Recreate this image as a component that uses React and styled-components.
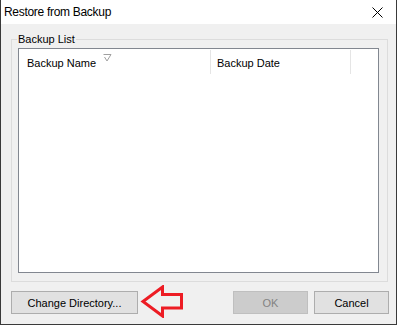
import React from 'react'
import styled, { createGlobalStyle } from 'styled-components'

const GlobalStyle = createGlobalStyle`
    body {
        margin: 0;
        background: #ffffff;
        font-family: "Liberation Sans", Arial, sans-serif;
    }
`;

const Window = styled.div`
    width: 397px;
    height: 325px;
    box-sizing: border-box;
    border: 1px solid #3a3a3a;
    border-top: none;
    display: flex;
    flex-direction: column;
    background: #f0f0f0;
`;

const TitleBar = styled.div`
    height: 24px;
    flex-shrink: 0;
    background: #ffffff;
    display: flex;
    align-items: center;
    justify-content: space-between;
    padding: 0 13px 0 3px;

    h1 {
        margin: 0;
        font-size: 12px;
        font-weight: normal;
        color: #000;
        letter-spacing: -0.3px;
    }
`;

const Body = styled.div`
    flex: 1;
    display: flex;
    flex-direction: column;
    padding: 9px 7px 10px 10px;
`;

const Group = styled.fieldset`
    margin: 0 1px 0 0;
    padding: 0 8px 6px 6px;
    border: 1px solid #dcdcdc;
    height: 249px;
    box-sizing: border-box;

    legend {
        padding: 0 1px;
        margin-left: -1px;
        font-size: 11px;
        line-height: 13px;
        color: #000;
    }
`;

const ListView = styled.div`
    height: 225px;
    box-sizing: border-box;
    margin-top: 2px;
    background: #ffffff;
    border: 1px solid #828790;
`;

const HeaderRow = styled.div`
    display: flex;
    height: 24px;
    padding-top: 1px;
`;

const Column = styled.div`
    width: ${p => p.$width}px;
    box-sizing: border-box;
    border-right: 1px solid #e5e5e5;
    padding: 2px 0 0 ${p => p.$pad}px;
    display: flex;
    align-items: center;
    font-size: 11px;
    color: #000;
    position: relative;
`;

const SortArrow = styled.svg`
    position: absolute;
    left: 84px;
    top: 4px;
`;

const ButtonRow = styled.div`
    display: flex;
    align-items: flex-start;
    margin-top: 9px;
    height: 23px;
`;

const Button = styled.button`
    width: ${p => p.$width || 75}px;
    height: 23px;
    box-sizing: border-box;
    margin: 0;
    padding: 0;
    font-family: "Liberation Sans", Arial, sans-serif;
    font-size: 11px;
    color: ${p => (p.disabled ? '#838383' : '#000')};
    background: ${p => (p.disabled ? '#cccccc' : '#e1e1e1')};
    border: 1px solid ${p => (p.disabled ? '#bfbfbf' : '#adadad')};
    border-radius: 0;
`;

const Spacer = styled.div`
    flex: 1;
`;

const Actions = styled.div`
    display: flex;
    gap: 6px;
`;

const Pointer = styled.svg`
    margin: -6px 0 0 2px;
    flex-shrink: 0;
`;

export default function App() {
    return (
        <>
            <GlobalStyle />
            <Window>
                <TitleBar>
                    <h1>Restore from Backup</h1>
                    <svg width="11" height="11" viewBox="0 0 11 11">
                        <path d="M0.5 0.5 L10.5 10.5 M10.5 0.5 L0.5 10.5" stroke="#000" strokeWidth="1" />
                    </svg>
                </TitleBar>
                <Body>
                    <Group>
                        <legend>Backup List</legend>
                        <ListView>
                            <HeaderRow>
                                <Column $width={192} $pad={8}>
                                    Backup Name
                                    <SortArrow width="9" height="8" viewBox="0 0 9 8">
                                        <path d="M0.5 0.5 H8 L4 7 L1.5 3" fill="none" stroke="#a0a0a0" strokeWidth="1" />
                                    </SortArrow>
                                </Column>
                                <Column $width={140} $pad={6}>Backup Date</Column>
                            </HeaderRow>
                        </ListView>
                    </Group>
                    <ButtonRow>
                        <Button $width={127}>Change Directory...</Button>
                        <Pointer width="44" height="33" viewBox="0 0 44 33">
                            <polygon
                                points="3,16.5 22.5,2 22.5,9.5 41.5,9.5 41.5,23 22.5,23 22.5,31"
                                fill="none"
                                stroke="#ed1c24"
                                strokeWidth="3"
                                strokeLinejoin="miter"
                            />
                        </Pointer>
                        <Spacer />
                        <Actions>
                            <Button disabled>OK</Button>
                            <Button>Cancel</Button>
                        </Actions>
                    </ButtonRow>
                </Body>
            </Window>
        </>
    )
}
